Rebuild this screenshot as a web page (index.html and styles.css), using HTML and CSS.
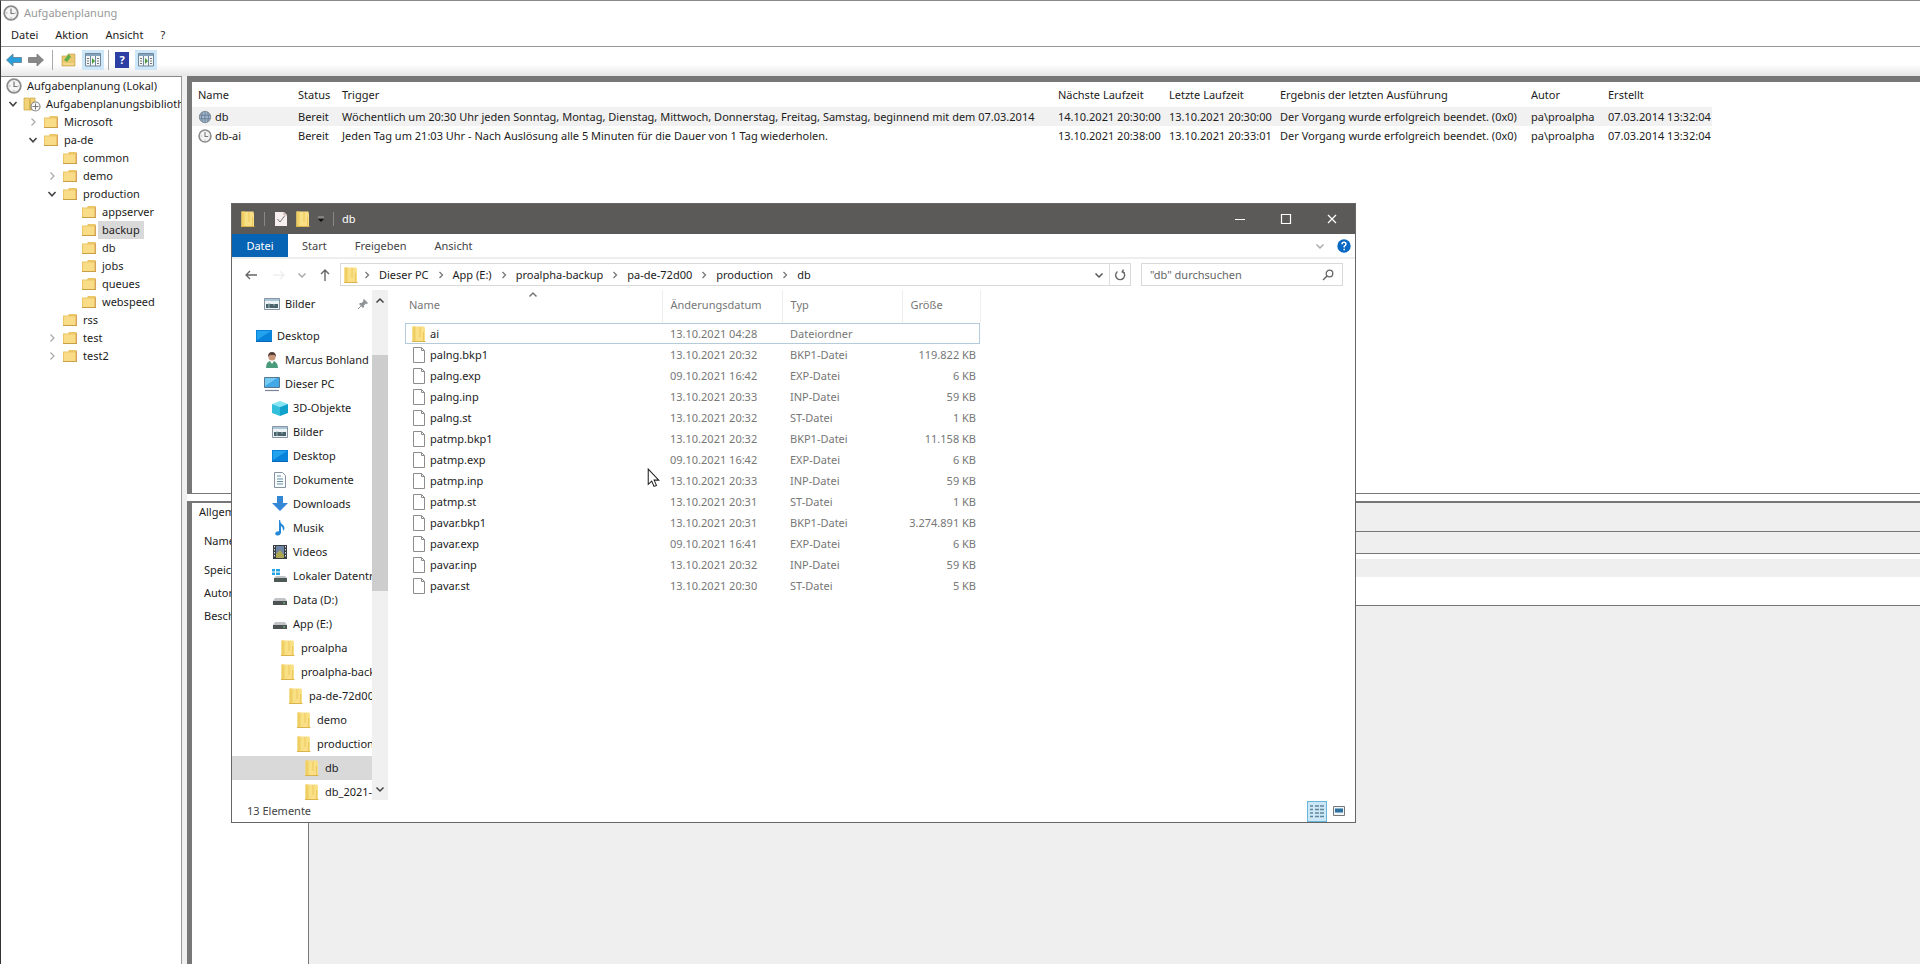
FILE: index.html
```html
<!DOCTYPE html>
<html lang="de">
<head>
<meta charset="utf-8">
<title>Aufgabenplanung</title>
<link rel="stylesheet" href="styles.css">
</head>
<body>
<svg class="defs" aria-hidden="true">
  <symbol id="clock" viewBox="0 0 16 16"><circle cx="8" cy="8" r="6.8" fill="#f4f4f4" stroke="#8c8c8c" stroke-width="1.8"/><path d="M8 3.5V8.5H11.5" fill="none" stroke="#777" stroke-width="1.2"/><path d="M8 12v1.5M3 8h1.5M12 8h1" stroke="#aaa"/></symbol>
  <symbol id="globe" viewBox="0 0 16 16"><circle cx="8" cy="8" r="6.5" fill="#9fb6cc" stroke="#7b8794"/><path d="M2 6h12M2 10h12M8 2v12M5 2.5q-2 5.500 0 11M11 2.500q2 5.500 0 11" fill="none" stroke="#5d7187" stroke-width=".8"/></symbol>
  <symbol id="folder" viewBox="0 0 16 16"><path d="M1 3.500h5l1-1.500h7.500v12H1z" fill="#ecc566"/><path d="M2 4.500h11V13H2z" fill="#f9dc88"/><path d="M1 13.500h14" stroke="#c89f45"/><path d="M14.500 3v10" stroke="#d8a262"/></symbol>
  <symbol id="winfolder" viewBox="0 0 16 16"><path d="M1.500.500h12l.5 3v12H1.500z" fill="#f9df85"/><path d="M1.500.500h3v15h-3z" fill="#f0cf62"/><path d="M9 1v10M12.500 6v9" stroke="#edc95c"/><path d="M1 15.500h13.500" stroke="#d9b34c"/></symbol>
  <symbol id="library" viewBox="0 0 18 16"><path d="M1 2h5l1 2v10H1zM7 2h5v12H7z" fill="#f1d277" stroke="#c9a444" stroke-width=".7"/><circle cx="12.500" cy="10.500" r="4.500" fill="#f7f7f7" stroke="#868686" stroke-width="1.200"/><path d="M12.500 7.500v6M9.500 10.500h6" stroke="#777"/></symbol>
  <symbol id="open" viewBox="0 0 10 10"><path d="M1.500 3 5 6.800 8.500 3" fill="none" stroke="#444" stroke-width="1.600"/></symbol>
  <symbol id="closed" viewBox="0 0 10 10"><path d="M3.500 1.500 7 5 3.500 8.500" fill="none" stroke="#a8a8a8" stroke-width="1.200"/></symbol>
  <symbol id="sep" viewBox="0 0 10 10"><path d="M3.500 2 6.500 5 3.500 8" fill="none" stroke="#777" stroke-width="1.300"/></symbol>
  <symbol id="up" viewBox="0 0 10 10"><path d="M1.500 6.500 5 3 8.500 6.500" fill="none" stroke="currentColor" stroke-width="1.500"/></symbol>
  <symbol id="down" viewBox="0 0 10 10"><path d="M1.500 3.500 5 7 8.500 3.500" fill="none" stroke="currentColor" stroke-width="1.500"/></symbol>
  <symbol id="arrow" viewBox="0 0 16 16"><path d="M.500 8 7 2v3.500h8.500v5H7V14z" fill="currentColor" stroke="#5d7b8c" stroke-width=".8"/></symbol>
  <symbol id="panel" viewBox="0 0 16 16"><path d="M.500 1.500h15v12.500H.500z" fill="#f1f5f5" stroke="#71879a"/><path d="M1 3h14" stroke="#85a4bd" stroke-width="2"/><path d="M5.500 4v10M10.500 4v10" stroke="#71879a"/><path d="M2 6.500h2M2 9h2M2 11.500h2M12 6.500h2M12 9h2M12 11.500h2" stroke="#777"/><path d="M7 6l3 3-3 3z" fill="#4a9a3b"/></symbol>
  <symbol id="desktop" viewBox="0 0 16 16"><path d="M0 2h16v12H0z" fill="#0883dc"/><path d="M1 3h14L1 12z" fill="#23a2ed"/><path d="M0 13.500h16" stroke="#0767b5"/></symbol>
  <symbol id="pc" viewBox="0 0 16 16"><path d="M.500 1.500h15v10H.500z" fill="#42a9e6" stroke="#56788f"/><path d="M1 2h12L1 10z" fill="#76cbf5"/><path d="M1 14.500h14" stroke="#7a8399" stroke-width="1.200"/></symbol>
  <symbol id="picture" viewBox="0 0 16 16"><path d="M.500 2.500h15v11H.500z" fill="#eef3f5" stroke="#87939f"/><path d="M1 4h14" stroke="#acc6dc" stroke-width="2"/><path d="M2 8h12v4H2z" fill="#4b646c"/><path d="M5 7v5M10 8v2" stroke="#97b4b8"/></symbol>
  <symbol id="user" viewBox="0 0 16 16"><path d="M2 16q0-6 4-7l2 3 2-3q4 2 4 7z" fill="#4b9c7d"/><circle cx="8" cy="5" r="3.500" fill="#c89576"/><path d="M4 5Q4 0 8 0t4 5L10.500 3H6z" fill="#574039"/></symbol>
  <symbol id="cube" viewBox="0 0 16 16"><path d="M0 4 8 1l8 3-8 3z" fill="#85e6f3"/><path d="M0 4l8 3v9l-8-3z" fill="#31bfdc"/><path d="M16 4 8 7v9l8-3z" fill="#10a2ca"/></symbol>
  <symbol id="doc" viewBox="0 0 16 16"><path d="M2.500.500h8l3 3v12h-11z" fill="#fafcfc" stroke="#8394a0"/><path d="M5 4h4M5 7h6M5 9.500h6M5 12h6" stroke="#648da9"/></symbol>
  <symbol id="download" viewBox="0 0 16 16"><path d="M5 0h6v7h5l-8 8-8-8h5z" fill="#3487d6"/></symbol>
  <symbol id="music" viewBox="0 0 16 16"><path d="M8 0q0 3 3 5 3 3 0 6 0-4-2-5v7q-1 3-4 2.500-3-1-1-3.500 1-1 3-.800V0z" fill="#2589d8"/></symbol>
  <symbol id="video" viewBox="0 0 16 16"><path d="M1 1h14v14H1z" fill="#353d42"/><path d="M4 2h8v12H4z" fill="#6e84a4"/><path d="M4 10l4-4 4 5v3H4z" fill="#aca653"/><path d="M2.500 2v12M13.500 2v12" stroke="#dce1e4" stroke-dasharray="1.500 1.500"/></symbol>
  <symbol id="drive" viewBox="0 0 16 16"><path d="M3 6h10l2 3H1z" fill="#c1c5c7"/><path d="M1 9h14v4H1z" fill="#4c5252"/><path d="M11 11h2" stroke="#7bd07d"/></symbol>
  <symbol id="windrive" viewBox="0 0 16 16"><path d="M0 1h3v2.500H0zM4 1h4v2.500H4zM0 4.500h3V7H0zM4 4.500h4V7H4z" fill="#23a3df"/><path d="M4 8h9l2 2H2z" fill="#c1c5c7"/><path d="M2 10h13v4H2z" fill="#4c5954"/></symbol>
  <symbol id="file" viewBox="0 0 16 16"><path d="M2.500.500h8l3 3v12h-11z" fill="#fff" stroke="#8d8d8d"/><path d="M10.500.500v3h3" fill="none" stroke="#8d8d8d"/></symbol>
  <symbol id="pin" viewBox="0 0 12 12"><path d="M7 1l4 4-1 1-1-.500-2 2V9L6 10 2 6l1-1h1.500l2-2L6 2z" fill="#909497"/><path d="M4 8l-3 3" stroke="#909497"/></symbol>
</svg>

<div class="app">
  <header class="app-title"><svg class="i16"><use href="#clock"/></svg><span>Aufgabenplanung</span></header>
  <nav class="menu"><button>Datei</button><button>Aktion</button><button>Ansicht</button><button>?</button></nav>
  <div class="toolbar">
    <button aria-label="Zurück"><svg class="i16 back"><use href="#arrow"/></svg></button>
    <button aria-label="Vorwärts"><svg class="i16 forward" viewBox="0 0 16 16"><path d="M15.500 8 9 2v3.500H.500v5H9V14z" fill="currentColor" stroke="#777" stroke-width=".8"/></svg></button>
    <i class="divider"></i>
    <button aria-label="Eine Ebene höher"><svg class="i16" viewBox="0 0 16 16"><path d="M1 4h5l1-2h7v12H1z" fill="#ebc86f" stroke="#bf9b45" stroke-width=".6"/><path d="M3 8l5-6 2 3-4 5z" fill="#5fb04b"/><path d="M2 12h11" stroke="#faeaad"/></svg></button>
    <button class="on" aria-label="Konsolenstruktur"><svg class="i16"><use href="#panel"/></svg></button>
    <i class="divider tight"></i>
    <button aria-label="Hilfe" class="help-button">?</button>
    <button class="on" aria-label="Aktionsbereich"><svg class="i16"><use href="#panel"/></svg></button>
  </div>

  <div class="workspace">
    <aside class="tree">
      <ul>
        <li class="root"><svg class="i16"><use href="#clock"/></svg><span>Aufgabenplanung (Lokal)</span></li>
        <li class="l1"><svg class="chev"><use href="#open"/></svg><svg class="lib"><use href="#library"/></svg><span>Aufgabenplanungsbibliothek</span></li>
        <li class="l2"><svg class="chev"><use href="#closed"/></svg><svg class="i16"><use href="#folder"/></svg><span>Microsoft</span></li>
        <li class="l2"><svg class="chev"><use href="#open"/></svg><svg class="i16"><use href="#folder"/></svg><span>pa-de</span></li>
        <li class="l3"><svg class="chev"></svg><svg class="i16"><use href="#folder"/></svg><span>common</span></li>
        <li class="l3"><svg class="chev"><use href="#closed"/></svg><svg class="i16"><use href="#folder"/></svg><span>demo</span></li>
        <li class="l3"><svg class="chev"><use href="#open"/></svg><svg class="i16"><use href="#folder"/></svg><span>production</span></li>
        <li class="l4"><svg class="chev"></svg><svg class="i16"><use href="#folder"/></svg><span>appserver</span></li>
        <li class="l4"><svg class="chev"></svg><svg class="i16"><use href="#folder"/></svg><span class="selected">backup</span></li>
        <li class="l4"><svg class="chev"></svg><svg class="i16"><use href="#folder"/></svg><span>db</span></li>
        <li class="l4"><svg class="chev"></svg><svg class="i16"><use href="#folder"/></svg><span>jobs</span></li>
        <li class="l4"><svg class="chev"></svg><svg class="i16"><use href="#folder"/></svg><span>queues</span></li>
        <li class="l4"><svg class="chev"></svg><svg class="i16"><use href="#folder"/></svg><span>webspeed</span></li>
        <li class="l3"><svg class="chev"></svg><svg class="i16"><use href="#folder"/></svg><span>rss</span></li>
        <li class="l3"><svg class="chev"><use href="#closed"/></svg><svg class="i16"><use href="#folder"/></svg><span>test</span></li>
        <li class="l3"><svg class="chev"><use href="#closed"/></svg><svg class="i16"><use href="#folder"/></svg><span>test2</span></li>
      </ul>
    </aside>

    <main class="content">
      <section class="tasks">
        <table class="task-table">
          <colgroup><col class="t-name"><col class="t-status"><col class="t-trigger"><col class="t-date"><col class="t-date"><col class="t-result"><col class="t-author"><col class="t-created"></colgroup>
          <thead><tr><th>Name</th><th>Status</th><th>Trigger</th><th>Nächste Laufzeit</th><th>Letzte Laufzeit</th><th>Ergebnis der letzten Ausführung</th><th>Autor</th><th>Erstellt</th></tr></thead>
          <tbody>
            <tr class="current"><td><span class="cell"><svg class="i14"><use href="#globe"/></svg>db</span></td><td>Bereit</td><td>Wöchentlich um 20:30 Uhr jeden Sonntag, Montag, Dienstag, Mittwoch, Donnerstag, Freitag, Samstag, beginnend mit dem 07.03.2014</td><td>14.10.2021 20:30:00</td><td>13.10.2021 20:30:00</td><td>Der Vorgang wurde erfolgreich beendet. (0x0)</td><td>pa\proalpha</td><td>07.03.2014 13:32:04</td></tr>
            <tr><td><span class="cell"><svg class="i14"><use href="#clock"/></svg>db-ai</span></td><td>Bereit</td><td>Jeden Tag um 21:03 Uhr - Nach Auslösung alle 5 Minuten für die Dauer von 1 Tag wiederholen.</td><td>13.10.2021 20:38:00</td><td>13.10.2021 20:33:01</td><td>Der Vorgang wurde erfolgreich beendet. (0x0)</td><td>pa\proalpha</td><td>07.03.2014 13:32:04</td></tr>
          </tbody>
        </table>
      </section>
      <section class="details">
        <div class="labels"><span class="tab">Allgemein</span><span class="name">Name:</span><span class="place">Speicherort:</span><span>Autor:</span><span>Beschreibung:</span></div>
        <div class="fields"><div class="f-tabs"></div><div class="f-name"></div><div class="f-place"></div><div class="f-text"></div><div class="f-rest"></div></div>
      </section>
    </main>
  </div>
</div>

<section class="explorer" aria-label="db">
  <header class="ex-title">
    <svg class="i16"><use href="#winfolder"/></svg><i class="bar"></i>
    <svg class="i16" viewBox="0 0 16 16"><path d="M2 1h9l3 3v11H2z" fill="#f7efed"/><path d="M4.500 8l2.500 3 4.500-6" fill="none" stroke="#777"/><path d="M11 1v3h3" fill="none" stroke="#c3aaa5"/></svg>
    <svg class="i16"><use href="#winfolder"/></svg>
    <svg class="quick" viewBox="0 0 8 8"><path d="M1 2h6" stroke="#aaa"/><path d="M1 4h6L4 7z" fill="#111"/></svg><i class="bar"></i>
    <span>db</span>
    <div class="controls">
      <button aria-label="Minimieren"><svg viewBox="0 0 12 12"><path d="M1 6.500h10" stroke="#fff"/></svg></button>
      <button aria-label="Maximieren"><svg viewBox="0 0 12 12"><path d="M1.500 1.500h9v9h-9z" fill="none" stroke="#fff" stroke-width="1.200"/></svg></button>
      <button aria-label="Schließen"><svg viewBox="0 0 12 12"><path d="M2 2l8 8M10 2l-8 8" stroke="#fff" stroke-width="1.300"/></svg></button>
    </div>
  </header>
  <nav class="ribbon"><button class="file-tab">Datei</button><button>Start</button><button>Freigeben</button><button>Ansicht</button>
    <span class="ribbon-end"><svg class="i10"><use href="#down"/></svg><svg class="i14" viewBox="0 0 14 14"><circle cx="7" cy="7" r="6.700" fill="#0869c5"/><path d="M5 5.300Q5 3.300 7 3.300t2 1.800Q9 6.300 7.200 7.300V8.500M7.200 9.800v1.400" fill="none" stroke="#fff" stroke-width="1.400"/></svg></span>
  </nav>
  <div class="address-row">
    <button aria-label="Zurück"><svg class="i14" viewBox="0 0 14 14"><path d="M13 7H2M6 3 2 7l4 4" fill="none" stroke="#666" stroke-width="1.300"/></svg></button>
    <button aria-label="Vorwärts"><svg class="i14" viewBox="0 0 14 14"><path d="M1 7h11M8 3l4 4-4 4" fill="none" stroke="#eee" stroke-width="1.300"/></svg></button>
    <button class="history" aria-label="Zuletzt besucht"><svg class="i10"><use href="#down"/></svg></button>
    <button aria-label="Nach oben"><svg class="i14" viewBox="0 0 14 14"><path d="M7 13V2M3 6l4-4 4 4" fill="none" stroke="#666" stroke-width="1.400"/></svg></button>
    <div class="address">
      <svg class="i16"><use href="#winfolder"/></svg>
      <div class="crumbs"><svg class="i10"><use href="#sep"/></svg><a href="#">Dieser PC</a><svg class="i10"><use href="#sep"/></svg><a href="#">App (E:)</a><svg class="i10"><use href="#sep"/></svg><a href="#">proalpha-backup</a><svg class="i10"><use href="#sep"/></svg><a href="#">pa-de-72d00</a><svg class="i10"><use href="#sep"/></svg><a href="#">production</a><svg class="i10"><use href="#sep"/></svg><a href="#">db</a></div>
      <button class="drop" aria-label="Verlauf"><svg class="i10"><use href="#down"/></svg></button>
      <button class="refresh" aria-label="Aktualisieren"><svg class="i12" viewBox="0 0 12 12"><path d="M8.500 2.500A4.500 4.500 0 1 1 3.500 2.300M2.500.500 3.800 3 1.200 4" fill="none" stroke="#666" stroke-width="1.400" transform="matrix(-1 0 0 1 12 0)"/></svg></button>
    </div>
    <label class="search"><input type="text" placeholder='"db" durchsuchen' aria-label="Suchen"><svg class="i12" viewBox="0 0 12 12"><circle cx="7.500" cy="4.500" r="3.300" fill="none" stroke="#666" stroke-width="1.300"/><path d="M5 7 1 11" stroke="#666" stroke-width="1.500"/></svg></label>
  </div>

  <div class="ex-body">
    <div class="nav-pane">
      <ul>
        <li class="n1 pinned"><svg class="i16"><use href="#picture"/></svg><span>Bilder</span><svg class="i12 pin"><use href="#pin"/></svg></li>
        <li class="n0"><svg class="i16"><use href="#desktop"/></svg><span>Desktop</span></li>
        <li class="n1"><svg class="i16"><use href="#user"/></svg><span>Marcus Bohland</span></li>
        <li class="n1"><svg class="i16"><use href="#pc"/></svg><span>Dieser PC</span></li>
        <li class="n2"><svg class="i16"><use href="#cube"/></svg><span>3D-Objekte</span></li>
        <li class="n2"><svg class="i16"><use href="#picture"/></svg><span>Bilder</span></li>
        <li class="n2"><svg class="i16"><use href="#desktop"/></svg><span>Desktop</span></li>
        <li class="n2"><svg class="i16"><use href="#doc"/></svg><span>Dokumente</span></li>
        <li class="n2"><svg class="i16"><use href="#download"/></svg><span>Downloads</span></li>
        <li class="n2"><svg class="i16"><use href="#music"/></svg><span>Musik</span></li>
        <li class="n2"><svg class="i16"><use href="#video"/></svg><span>Videos</span></li>
        <li class="n2"><svg class="i16"><use href="#windrive"/></svg><span>Lokaler Datenträger (C:)</span></li>
        <li class="n2"><svg class="i16"><use href="#drive"/></svg><span>Data (D:)</span></li>
        <li class="n2"><svg class="i16"><use href="#drive"/></svg><span>App (E:)</span></li>
        <li class="n3"><svg class="i16"><use href="#winfolder"/></svg><span>proalpha</span></li>
        <li class="n3"><svg class="i16"><use href="#winfolder"/></svg><span>proalpha-backup</span></li>
        <li class="n4"><svg class="i16"><use href="#winfolder"/></svg><span>pa-de-72d00</span></li>
        <li class="n5"><svg class="i16"><use href="#winfolder"/></svg><span>demo</span></li>
        <li class="n5"><svg class="i16"><use href="#winfolder"/></svg><span>production</span></li>
        <li class="n6 picked"><svg class="i16"><use href="#winfolder"/></svg><span>db</span></li>
        <li class="n6"><svg class="i16"><use href="#winfolder"/></svg><span>db_2021-10</span></li>
      </ul>
      <div class="scroll"><svg class="i10"><use href="#up"/></svg><i class="thumb"></i><svg class="i10"><use href="#down"/></svg></div>
    </div>
    <div class="files">
      <table class="file-table">
        <colgroup><col class="f-c1"><col class="f-c2"><col class="f-c3"><col class="f-c4"></colgroup>
        <thead><tr><th>Name<svg class="i10 sort"><use href="#up"/></svg></th><th>Änderungsdatum</th><th>Typ</th><th>Größe</th></tr></thead>
        <tbody>
          <tr class="focus"><td><span class="cell"><svg class="i16"><use href="#winfolder"/></svg>ai</span></td><td>13.10.2021 04:28</td><td>Dateiordner</td><td></td></tr>
          <tr><td><span class="cell"><svg class="i16"><use href="#file"/></svg>palng.bkp1</span></td><td>13.10.2021 20:32</td><td>BKP1-Datei</td><td>119.822 KB</td></tr>
          <tr><td><span class="cell"><svg class="i16"><use href="#file"/></svg>palng.exp</span></td><td>09.10.2021 16:42</td><td>EXP-Datei</td><td>6 KB</td></tr>
          <tr><td><span class="cell"><svg class="i16"><use href="#file"/></svg>palng.inp</span></td><td>13.10.2021 20:33</td><td>INP-Datei</td><td>59 KB</td></tr>
          <tr><td><span class="cell"><svg class="i16"><use href="#file"/></svg>palng.st</span></td><td>13.10.2021 20:32</td><td>ST-Datei</td><td>1 KB</td></tr>
          <tr><td><span class="cell"><svg class="i16"><use href="#file"/></svg>patmp.bkp1</span></td><td>13.10.2021 20:32</td><td>BKP1-Datei</td><td>11.158 KB</td></tr>
          <tr><td><span class="cell"><svg class="i16"><use href="#file"/></svg>patmp.exp</span></td><td>09.10.2021 16:42</td><td>EXP-Datei</td><td>6 KB</td></tr>
          <tr><td><span class="cell"><svg class="i16"><use href="#file"/></svg>patmp.inp</span></td><td>13.10.2021 20:33</td><td>INP-Datei</td><td>59 KB</td></tr>
          <tr><td><span class="cell"><svg class="i16"><use href="#file"/></svg>patmp.st</span></td><td>13.10.2021 20:31</td><td>ST-Datei</td><td>1 KB</td></tr>
          <tr><td><span class="cell"><svg class="i16"><use href="#file"/></svg>pavar.bkp1</span></td><td>13.10.2021 20:31</td><td>BKP1-Datei</td><td>3.274.891 KB</td></tr>
          <tr><td><span class="cell"><svg class="i16"><use href="#file"/></svg>pavar.exp</span></td><td>09.10.2021 16:41</td><td>EXP-Datei</td><td>6 KB</td></tr>
          <tr><td><span class="cell"><svg class="i16"><use href="#file"/></svg>pavar.inp</span></td><td>13.10.2021 20:32</td><td>INP-Datei</td><td>59 KB</td></tr>
          <tr><td><span class="cell"><svg class="i16"><use href="#file"/></svg>pavar.st</span></td><td>13.10.2021 20:30</td><td>ST-Datei</td><td>5 KB</td></tr>
        </tbody>
      </table>
    </div>
  </div>
  <footer class="status"><span>13 Elemente</span>
    <div class="views"><button class="active" aria-label="Details"><svg class="i16" viewBox="0 0 16 16"><path d="M1 3h3M1 6.500h3M1 10h3M1 13.500h3M6 3h4M6 6.500h4M6 10h4M6 13.500h4M11 3h4M11 6.500h4M11 10h4M11 13.500h4" stroke="#60879b" stroke-width="1.300"/></svg></button><button aria-label="Große Symbole"><svg class="i14" viewBox="0 0 14 14"><path d="M1.500 2.500h11v9h-11z" fill="#eef4f7" stroke="#777"/><path d="M3 4.500h8v4H3z" fill="#2c719f"/></svg></button></div>
  </footer>
</section>

<svg class="pointer" viewBox="0 0 12 19" aria-hidden="true"><path d="M1 1v14.500l3.300-3 2.200 5 2.300-1-2.200-5H11z" fill="#fff" stroke="#222"/></svg>
</body>
</html>
```

FILE: styles.css
```css
* { box-sizing: border-box; }
body { margin: 0; font: 11px/18px "Noto Sans", "Open Sans", sans-serif; color: #1c1c1c; background: #fff; }
ul { list-style: none; margin: 0; padding: 0; }
button { border: 0; padding: 0; background: none; font: inherit; color: inherit; display: inline-flex; align-items: center; justify-content: center; }
a { color: inherit; text-decoration: none; }
svg { flex: none; display: block; }
table { border-collapse: collapse; table-layout: fixed; }
th, td { padding: 0; font-weight: 400; text-align: left; white-space: nowrap; }
.defs { display: none; }
.i16 { width: 16px; height: 16px; }
.i14 { width: 14px; height: 14px; }
.i12 { width: 12px; height: 12px; }
.i10 { width: 10px; height: 10px; }

.app { height: 100vh; display: flex; flex-direction: column; overflow: hidden; border-left: 1px solid #333; border-top: 1px solid #888; }
.app-title { display: flex; align-items: center; gap: 5px; height: 23px; padding-left: 2px; color: #999; }
.menu { display: flex; gap: 17px; height: 22px; padding-left: 10px; align-items: center; }
.toolbar { display: flex; align-items: center; height: 30px; padding: 0 0 4px 4px; gap: 4px; border-top: 1px solid #999; background: linear-gradient(#fff 60%, #e6e6e6); }
.toolbar button { width: 18px; height: 20px; }
.toolbar .on { width: 22px; background: #cde6f8; }
.toolbar .help-button { width: 14px; height: 16px; margin: 0 2px; background: #2b3fa5; color: #fff; font-weight: 700; }
.back { color: #29a0dc; }
.forward { color: #888; }
.divider { width: 1px; height: 20px; background: #aaa; margin: 0 3px; }
.divider.tight { margin: 0; }

.workspace { flex: 1; min-height: 0; display: grid; grid-template-columns: 181px minmax(0, 1fr); }
.tree { overflow: hidden; border-top: 1px solid #888; border-right: 1px solid #999; }
.tree li { display: flex; align-items: center; height: 18px; gap: 5px; white-space: nowrap; }
.chev { width: 10px; height: 10px; }
.lib { width: 18px; height: 16px; }
.tree .root { padding-left: 5px; }
.l1 { padding-left: 7px; }
.l2 { padding-left: 27px; }
.l3 { padding-left: 46px; }
.l4 { padding-left: 65px; }
.tree .selected { background: #d9d9d9; padding: 0 4px; margin: 0 -4px; }

.content { display: grid; grid-template-rows: 418px minmax(0, 1fr); border-left: 5px solid #f0f0f0; }
.tasks { overflow: hidden; border-left: 5px solid #777; border-top: 6px solid #777; border-bottom: 1px solid #777; }
.task-table { width: 1520px; }
.t-name { width: 106px; }
.t-status { width: 44px; }
.t-trigger { width: 716px; }
.t-date { width: 111px; }
.t-result { width: 251px; }
.t-author { width: 77px; }
.t-created { width: 104px; }
.task-table th:first-child, .task-table td:first-child { padding-left: 6px; }
.task-table th { height: 25px; }
.task-table td { height: 19px; }
.current { background: #f1f1f1; }
.cell { display: flex; align-items: center; gap: 3px; }

.details { display: grid; grid-template-columns: 117px minmax(0, 1fr); margin-top: 7px; border-top: 2px solid #777; border-left: 5px solid #777; }
.labels { display: flex; flex-direction: column; gap: 5px; padding-left: 12px; border-right: 1px solid #777; }
.labels .tab { margin-left: -5px; }
.labels .name { margin-top: 6px; }
.labels .place { margin-top: 6px; }
.fields { display: flex; flex-direction: column; background: #efefef; }
.f-tabs { height: 29px; border-bottom: 1px solid #777; }
.f-name { height: 22px; border-bottom: 1px solid #777; }
.f-place { height: 23px; border-top: 5px solid #fff; }
.f-text { height: 29px; background: #fff; border-bottom: 1px solid #777; }
.f-rest { flex: 1; }

.explorer { position: absolute; left: 231px; top: 203px; width: 1125px; height: 620px; display: flex; flex-direction: column; background: #fff; border: 1px solid #666; }
.ex-title { display: flex; align-items: center; gap: 6px; height: 30px; padding-left: 8px; background: #5b5a59; color: #fff; }
.bar { width: 1px; height: 14px; background: #888; margin: 0 2px; }
.quick { width: 8px; height: 8px; }
.controls { display: flex; margin-left: auto; }
.controls button { width: 46px; height: 30px; }
.controls svg { width: 12px; height: 12px; }
.ribbon { display: flex; height: 25px; color: #444; border-bottom: 2px solid #eee; }
.ribbon button { padding: 0 14px; }
.ribbon .file-tab { width: 56px; padding: 0; background: #0763b3; color: #fff; }
.ribbon-end { margin-left: auto; display: flex; align-items: center; gap: 12px; padding-right: 4px; color: #aaa; }
.address-row { display: flex; align-items: center; height: 31px; padding: 0 12px; gap: 14px; }
.history { color: #aaa; margin: 0 -3px; }
.address { flex: 1; min-width: 0; height: 23px; display: flex; align-items: center; gap: 3px; margin: 0 -4px 0 -6px; padding-left: 2px; border: 1px solid #d9d9d9; }
.crumbs { display: flex; align-items: center; gap: 7px; }
.drop { margin-left: auto; margin-right: 2px; color: #555; }
.refresh { width: 21px; height: 21px; border-left: 1px solid #ddd; }
.search { display: flex; align-items: center; width: 202px; height: 23px; padding: 0 8px; border: 1px solid #d9d9d9; }
.search input { flex: 1; min-width: 0; border: 0; padding: 0; font: inherit; color: #555; background: none; }
.search input::placeholder { color: #666; opacity: 1; }

.ex-body { flex: 1; min-height: 0; display: grid; grid-template-columns: 156px minmax(0, 1fr); }
.nav-pane { display: grid; grid-template-columns: minmax(0, 1fr) 16px; min-height: 0; }
.nav-pane ul { overflow: hidden; min-height: 0; padding-top: 2px; }
.nav-pane li { display: flex; align-items: center; gap: 5px; height: 24px; white-space: nowrap; }
.nav-pane .pinned { margin-bottom: 8px; }
.pin { margin-left: auto; margin-right: 3px; }
.n0 { padding-left: 24px; }
.n1 { padding-left: 32px; }
.n2 { padding-left: 40px; }
.n3 { padding-left: 48px; }
.n4 { padding-left: 56px; }
.n5 { padding-left: 64px; }
.n6 { padding-left: 72px; }
.picked { background: #d9d9d9; }
.scroll { display: flex; flex-direction: column; align-items: center; justify-content: space-between; padding: 6px 0; background: #f0f0f0; color: #444; }
.thumb { width: 16px; height: 236px; background: #cdcdcd; margin-bottom: 144px; }
.files { padding-left: 17px; color: #777; }
.file-table { width: 575px; }
.f-c1 { width: 257px; }
.f-c2 { width: 120px; }
.f-c3 { width: 120px; }
.f-c4 { width: 78px; }
.file-table th { height: 33px; padding: 0 0 4px 8px; border-right: 1px solid #eee; }
.file-table th:first-child { position: relative; padding-left: 4px; }
.sort { position: absolute; left: 123px; top: 0; }
.file-table td { height: 21px; padding-left: 8px; }
.file-table td:first-child { padding-left: 6px; color: #222; }
.file-table td:last-child { text-align: right; padding: 0 4px 0 0; }
.focus { outline: 1px solid #b4cbdc; outline-offset: -1px; }
.status { display: flex; align-items: center; justify-content: space-between; height: 22px; padding: 0 6px 0 15px; color: #444; }
.views { display: flex; gap: 2px; }
.views button { width: 20px; height: 21px; }
.views .active { background: #cce8f6; border: 1px solid #68b7d8; }
.pointer { position: absolute; left: 647px; top: 468px; width: 13px; height: 20px; }
```
